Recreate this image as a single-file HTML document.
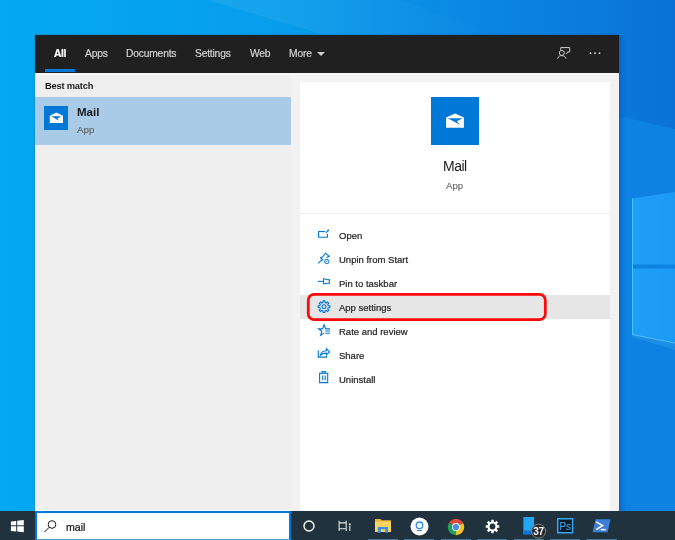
<!DOCTYPE html>
<html><head><meta charset="utf-8">
<style>
*{margin:0;padding:0;box-sizing:border-box}
html,body{width:675px;height:540px;overflow:hidden}
body{position:relative;font-family:"Liberation Sans",sans-serif;background:linear-gradient(90deg,#0ca6f1 0%,#0b9cee 30%,#0a88e4 60%,#0977db 100%)}
.a{position:absolute;white-space:nowrap;line-height:1}
.t{will-change:transform;-webkit-text-stroke:0.2px currentColor}
.ns{-webkit-text-stroke:0}
#bg{position:absolute;left:0;top:0}
#panel{position:absolute;left:35px;top:35px;width:584px;height:476px;background:#f2f2f2;box-shadow:0 0 2px rgba(0,30,80,0.35)}
#hdr{position:absolute;left:0;top:0;width:584px;height:38px;background:#202020}
#left{position:absolute;left:0;top:40px;width:256px;height:436px;background:#efefef}
#sel{position:absolute;left:0;top:62px;width:256px;height:48px;background:#a9cbe8}
#card{position:absolute;left:265px;top:47px;width:310px;height:429px;background:#fff}
.tab{position:absolute;top:14px;font-size:9.7px;color:#cdcdcd;line-height:1}
.mi{position:absolute;left:39px;font-size:9.6px;color:#222;line-height:1}
#tb{position:absolute;left:0;top:511px;width:675px;height:29px;background:#1f323d}
#sbox{position:absolute;left:35px;top:511px;width:256px;height:29px;background:#fff;border:2px solid #0078d7;border-bottom:1px solid #4a9be0}
.ind{position:absolute;top:539px;height:1px;background:#4a7ca2}
</style></head><body>
<svg id="bg" width="675" height="540">
  <defs>
    <linearGradient id="bgg" x1="0" y1="0" x2="675" y2="0" gradientUnits="userSpaceOnUse">
      <stop offset="0" stop-color="#03a9f1"/>
      <stop offset="0.4" stop-color="#079eec"/>
      <stop offset="0.7" stop-color="#0a88e3"/>
      <stop offset="1" stop-color="#0a72d7"/>
    </linearGradient>
    <linearGradient id="pane" x1="0" y1="0" x2="1" y2="0">
      <stop offset="0" stop-color="#1fa0f8"/><stop offset="1" stop-color="#1b9af4"/>
    </linearGradient>
  </defs>
  <rect width="675" height="540" fill="url(#bgg)"/>
  <linearGradient id="streak" x1="0" y1="0" x2="1" y2="0"><stop offset="0" stop-color="#fff" stop-opacity="0.07"/><stop offset="1" stop-color="#fff" stop-opacity="0"/></linearGradient>
  <polygon points="208,0 400,0 500,36 328,36" fill="url(#streak)"/>
  <polygon points="619,116 675,129 675,540 619,540" fill="#0d82e2"/>
  <linearGradient id="sh" x1="0" y1="0" x2="1" y2="0"><stop offset="0" stop-color="#0660c0" stop-opacity="0.6"/><stop offset="1" stop-color="#0660c0" stop-opacity="0"/></linearGradient>
  <rect x="619" y="35" width="7" height="476" fill="url(#sh)"/>
  <polygon points="632,198.5 675,192 675,264.5 632,264.5" fill="url(#pane)"/>
  <polygon points="632,268.5 675,268.5 675,343 632,334.5" fill="url(#pane)"/>
  <line x1="632.5" y1="198.5" x2="632.5" y2="334.5" stroke="#44c6fc" stroke-width="1"/>
  <polygon points="632,334.5 675,343 675,350 632,337" fill="#2a9cee" opacity="0.5"/>
  <line x1="632" y1="334.5" x2="675" y2="343" stroke="#5ec6f7" stroke-width="1" opacity="0.8"/>
</svg>

<div id="panel">
  <div id="hdr">
    <div class="a" style="left:10px;top:34px;width:30px;height:3px;background:#0078d7"></div>
  </div>
  <div class="a" style="left:0;top:38px;width:584px;height:2px;background:#f7f7f7"></div>
  <div id="left">
  </div>
  <div id="sel"></div>
  <div id="card"></div>
</div>

<!-- header tabs -->
<div class="a t" style="left:54px;top:48.5px;font-size:10.2px;font-weight:bold;letter-spacing:-0.3px;color:#fff">All</div>
<div class="a t" style="left:85px;top:48.5px;font-size:10.3px;letter-spacing:-0.2px;color:#d2d2d2">Apps</div>
<div class="a t" style="left:126px;top:48.5px;font-size:10.3px;letter-spacing:-0.2px;color:#d2d2d2">Documents</div>
<div class="a t" style="left:195px;top:48.5px;font-size:10.3px;letter-spacing:-0.2px;color:#d2d2d2">Settings</div>
<div class="a t" style="left:250px;top:48.5px;font-size:10.3px;letter-spacing:-0.2px;color:#d2d2d2">Web</div>
<div class="a t" style="left:289px;top:48.5px;font-size:10.3px;letter-spacing:-0.2px;color:#d2d2d2">More</div>
<svg class="a" style="left:316px;top:51px" width="10" height="6"><polygon points="1,1 9,1 5,5" fill="#cdcdcd"/></svg>

<!-- feedback icon -->
<svg class="a" style="left:556px;top:46px" width="16" height="14" fill="none" stroke="#cfcfcf" stroke-width="1">
  <path d="M4.7,4 V1.6 H13.7 V6 H11.5 L10.4,8.2"/>
  <circle cx="5.8" cy="6.9" r="2.5"/>
  <path d="M1.6,12.7 C2.3,10.3 4,9.6 5.8,9.6 C7.6,9.6 9.3,10.3 10,12.7"/>
</svg>
<svg class="a" style="left:588px;top:51px" width="14" height="5">
  <circle cx="2.5" cy="2.2" r="0.9" fill="#d8d8d8"/><circle cx="7" cy="2.2" r="0.9" fill="#d8d8d8"/><circle cx="11.5" cy="2.2" r="0.9" fill="#d8d8d8"/>
</svg>

<!-- left list -->
<div class="a t ns" style="left:45px;top:82px;font-size:9.3px;font-weight:bold;letter-spacing:-0.2px;color:#1a1a1a">Best match</div>
<div class="a" style="left:44px;top:106px;width:24px;height:24px;background:#0078d7"></div>
<svg class="a" style="left:44px;top:106px" width="24" height="24">
  <path d="M5.8,9.7 L12.3,6.5 L19,9.7 V16.9 H5.8 Z" fill="#fff"/>
  <path d="M7.3,10.2 H17.2 L13.5,12.6 L14.8,14.8 Z" fill="#0078d7"/>
</svg>
<div class="a t ns" style="left:77px;top:107px;font-size:11.5px;font-weight:bold;color:#1a1a1a">Mail</div>
<div class="a t" style="left:77px;top:125px;font-size:9.8px;color:#666">App</div>

<!-- right card header -->
<div class="a" style="left:431px;top:97px;width:48px;height:48px;background:#0078d7"></div>
<svg class="a" style="left:431px;top:97px" width="48" height="48">
  <path d="M15.1,20.6 L24,16.5 L32.9,20.6 V30.8 H15.1 Z" fill="#fff"/>
  <path d="M16.8,21.2 H31.8 L25.8,24.2 L29,27.8 Z" fill="#0078d7"/>
</svg>
<div class="a t ns" style="left:443px;top:159px;font-size:14px;letter-spacing:-0.5px;color:#1a1a1a">Mail</div>
<div class="a t" style="left:446px;top:181px;font-size:9.6px;color:#707070">App</div>
<div class="a" style="left:300px;top:213px;width:310px;height:1px;background:#eeeeee"></div>

<!-- highlighted row -->
<div class="a" style="left:300px;top:295px;width:310px;height:24px;background:#e6e6e6"></div>

<!-- menu items -->
<div class="a t" style="left:339px;top:231px;font-size:9.5px;color:#222">Open</div>
<div class="a t" style="left:339px;top:255px;font-size:9.5px;color:#222">Unpin from Start</div>
<div class="a t" style="left:339px;top:279px;font-size:9.5px;color:#222">Pin to taskbar</div>
<div class="a t" style="left:339px;top:303px;font-size:9.5px;color:#222">App settings</div>
<div class="a t" style="left:339px;top:327px;font-size:9.5px;color:#222">Rate and review</div>
<div class="a t" style="left:339px;top:351px;font-size:9.5px;color:#222">Share</div>
<div class="a t" style="left:339px;top:375px;font-size:9.5px;color:#222">Uninstall</div>

<!-- menu icons -->
<svg class="a" style="left:316px;top:226px" width="16" height="14" fill="none" stroke="#0078d7" stroke-width="1.1">
  <path d="M9,5.5 H2.6 V11.3 H11.4 V7.7"/><path d="M9.9,6.8 L12,4.6"/><circle cx="12.2" cy="4.4" r="0.9" fill="#0078d7" stroke="none"/>
</svg>
<svg class="a" style="left:316px;top:251px" width="16" height="15" fill="none" stroke="#0078d7" stroke-width="1.1">
  <path d="M2.3,12.3 L6,8.7"/><path d="M4.3,6.5 L6.5,6 L9.5,2.2 L13.2,5.3 L10.5,6.5"/><path d="M4.3,6.5 L7.3,9.3"/><circle cx="10.8" cy="10.5" r="2.2" stroke-width="1"/><path d="M9.7,11.6 L11.9,9.4" stroke-width="0.9"/>
</svg>
<svg class="a" style="left:316px;top:276px" width="16" height="11" fill="none" stroke="#0078d7" stroke-width="1.1">
  <path d="M2,5.4 H7"/><path d="M7.5,2.4 V8.2"/><path d="M7.5,2.6 Q10.5,4 13.3,3.6 V7.3 Q10.5,6.9 7.5,8"/>
</svg>
<svg class="a" style="left:316px;top:300px" width="16" height="16" fill="none" stroke="#0078d7" stroke-width="1.1">
  <circle cx="8" cy="6.7" r="1.9"/>
  <path d="M6.93,2.54 L7.11,0.87 L8.89,0.87 L9.07,2.54 L10.19,3.00 L11.50,1.95 L12.75,3.20 L11.70,4.51 L12.16,5.63 L13.83,5.81 L13.83,7.59 L12.16,7.77 L11.70,8.89 L12.75,10.20 L11.50,11.45 L10.19,10.40 L9.07,10.86 L8.89,12.53 L7.11,12.53 L6.93,10.86 L5.81,10.40 L4.50,11.45 L3.25,10.20 L4.30,8.89 L3.84,7.77 L2.17,7.59 L2.17,5.81 L3.84,5.63 L4.30,4.51 L3.25,3.20 L4.50,1.95 L5.81,3.00 Z"/>
</svg>
<svg class="a" style="left:316px;top:323px" width="16" height="14" fill="none" stroke="#0078d7" stroke-width="1.1">
  <path d="M9.6,5.9 L8.1,1.9 L6.6,5.9 L2.6,5.9 L5.8,8.3 L4.6,12.4 L8,9.9"/>
  <path d="M9.3,5.9 H14 M9.3,8 H14 M9.3,10.2 H14"/>
</svg>
<svg class="a" style="left:316px;top:346px" width="16" height="14" fill="none" stroke="#0078d7" stroke-width="1.1">
  <path d="M2.3,4.2 V11.1 H10.5 V9.6"/><path d="M4.4,9.3 C5.2,6 7.8,4.7 10.4,4.7 V2.7 L13.6,5.9 L10.4,8.8 V7.1 C8,7 6,7.8 4.4,9.3 Z"/>
</svg>
<svg class="a" style="left:317px;top:370px" width="14" height="15" fill="none" stroke="#0078d7" stroke-width="1.1">
  <path d="M2,3.3 H11.3"/><path d="M5,3.3 V1.6 H8.3 V3.3"/><path d="M2.6,3.3 V12.6 H10.7 V3.3"/><path d="M5.7,5.5 V10.3 M8.2,5.5 V10.3"/>
</svg>

<!-- red annotation -->
<svg class="a" style="left:300px;top:285px" width="260" height="45"><rect x="8.3" y="9.3" width="237" height="25.4" rx="5.8" ry="5.8" fill="none" stroke="#fc0a0a" stroke-width="2.8"/></svg>

<!-- taskbar -->
<div id="tb"></div>
<div class="a" style="left:35px;top:510px;width:256px;height:1px;background:#fff"></div>
<div id="sbox"></div>
<svg class="a" style="left:9px;top:518px" width="17" height="16">
  <path d="M1.9,3.6 L7.2,2.9 V7.3 H1.9 Z M8.2,2.8 L14.8,2 V7.3 H8.2 Z M1.9,8.3 H7.2 V13.6 L1.9,12.9 Z M8.2,8.3 H14.8 V14.2 L8.2,13.6 Z" fill="#fff"/>
</svg>
<svg class="a" style="left:43px;top:519px" width="15" height="14" fill="none" stroke="#1a1a1a" stroke-width="1">
  <circle cx="9" cy="5.5" r="3.8"/><path d="M6.3,8.2 L1.5,13"/>
</svg>
<div class="a t" style="left:66px;top:522px;font-size:10.6px;color:#111">mail</div>

<svg class="a" style="left:302px;top:519px" width="14" height="14"><circle cx="7" cy="7" r="5" fill="none" stroke="#fff" stroke-width="1.4"/></svg>
<svg class="a" style="left:337px;top:519px" width="15" height="14" fill="none" stroke="#e4e4e4" stroke-width="1.1">
  <path d="M2.1,1.7 V11.9 M9.2,1.7 V11.9 M2.1,3.9 H9.2 M2.1,9.7 H9.2"/><path d="M12.8,6.5 V12"/><circle cx="12.8" cy="5.3" r="1" fill="#e4e4e4" stroke="none"/>
</svg>
<!-- folder -->
<svg class="a" style="left:374px;top:518px" width="18" height="16">
  <path d="M1,1 H6.5 L7.5,2.2 H17 V14 H1 Z" fill="#e9b430"/>
  <path d="M1,3.5 H17 V14 H1 Z" fill="#fcd462"/>
  <path d="M3.8,9 H14 V14.7 H11.3 V11.3 H6.9 V14.7 H3.8 Z" fill="#3d8fe8"/>
</svg>
<!-- white circle app -->
<svg class="a" style="left:410px;top:516.5px" width="19" height="19">
  <circle cx="9.5" cy="9.5" r="9" fill="#fff"/>
  <circle cx="9.5" cy="8.3" r="3.3" fill="none" stroke="#2c8fe0" stroke-width="1.3"/>
  <path d="M7,13.5 H12" stroke="#2c8fe0" stroke-width="1.2"/>
</svg>
<!-- chrome -->
<svg class="a" style="left:447px;top:517.5px" width="18" height="18">
  <path d="M9,9 L1.9,4.9 A8.2,8.2 0 0 1 16.1,4.9 Z" fill="#e04a3b"/>
  <path d="M9,9 L16.1,4.9 A8.2,8.2 0 0 1 9,17.2 Z" fill="#f5c12e"/>
  <path d="M9,9 L9,17.2 A8.2,8.2 0 0 1 1.9,4.9 Z" fill="#1ea35a"/>
  <circle cx="9" cy="9" r="4" fill="#fff"/>
  <circle cx="9" cy="9" r="3.1" fill="#4a90e2"/>
</svg>
<!-- gear -->
<svg class="a" style="left:485px;top:518.5px" width="15" height="15">
  <path fill-rule="evenodd" d="M6.17,2.68 L6.33,0.70 L8.67,0.70 L8.83,2.68 L9.96,3.15 L11.48,1.87 L13.13,3.52 L11.85,5.04 L12.32,6.17 L14.30,6.33 L14.30,8.67 L12.32,8.83 L11.85,9.96 L13.13,11.48 L11.48,13.13 L9.96,11.85 L8.83,12.32 L8.67,14.30 L6.33,14.30 L6.17,12.32 L5.04,11.85 L3.52,13.13 L1.87,11.48 L3.15,9.96 L2.68,8.83 L0.70,8.67 L0.70,6.33 L2.68,6.17 L3.15,5.04 L1.87,3.52 L3.52,1.87 L5.04,3.15 Z M7.50,4.60 A2.9,2.9 0 1 0 7.50,10.40 A2.9,2.9 0 1 0 7.50,4.60 Z" fill="#fff"/>
</svg>
<!-- phone app with badge -->
<svg class="a" style="left:522px;top:516px;will-change:transform" width="28" height="24">
  <rect x="1.4" y="1" width="10.6" height="17.3" fill="#22a6f3"/>
  <rect x="1.4" y="14.5" width="10.6" height="3.8" fill="#1572d6"/>
  <circle cx="16.6" cy="15.2" r="7" fill="#262a2d" stroke="#8a8a8a" stroke-width="0.9"/>
  <text x="16.4" y="18.8" font-family="Liberation Sans" font-size="10" font-weight="bold" fill="#fff" text-anchor="middle" letter-spacing="-0.3">37</text>
</svg>
<!-- PS -->
<svg class="a" style="left:557px;top:517.5px;will-change:transform" width="17" height="16">
  <rect x="0.75" y="0.75" width="14.8" height="14" fill="#0b1a22" stroke="#31a8ff" stroke-width="1.5"/>
  <text x="8.1" y="11.6" font-family="Liberation Sans" font-size="10" fill="#3fb0ff" text-anchor="middle" letter-spacing="-0.2">Ps</text>
</svg>
<!-- powershell -->
<svg class="a" style="left:592px;top:519px" width="19" height="15">
  <path d="M3.5,0.3 H18.5 L15.6,13.3 H0.6 Z" fill="#3e7fd6"/>
  <path d="M4.3,2.9 L10.5,6.6 L4.3,10.6" fill="none" stroke="#fff" stroke-width="1.6"/>
  <path d="M8.8,10.6 H13.8" stroke="#fff" stroke-width="1.4"/>
</svg>
<!-- running indicators -->
<div class="ind" style="left:368px;width:30px"></div>
<div class="ind" style="left:404px;width:30px"></div>
<div class="ind" style="left:441px;width:30px"></div>
<div class="ind" style="left:477px;width:30px"></div>
<div class="ind" style="left:514px;width:30px"></div>
<div class="ind" style="left:550px;width:30px"></div>
<div class="ind" style="left:587px;width:30px"></div>
</body></html>
